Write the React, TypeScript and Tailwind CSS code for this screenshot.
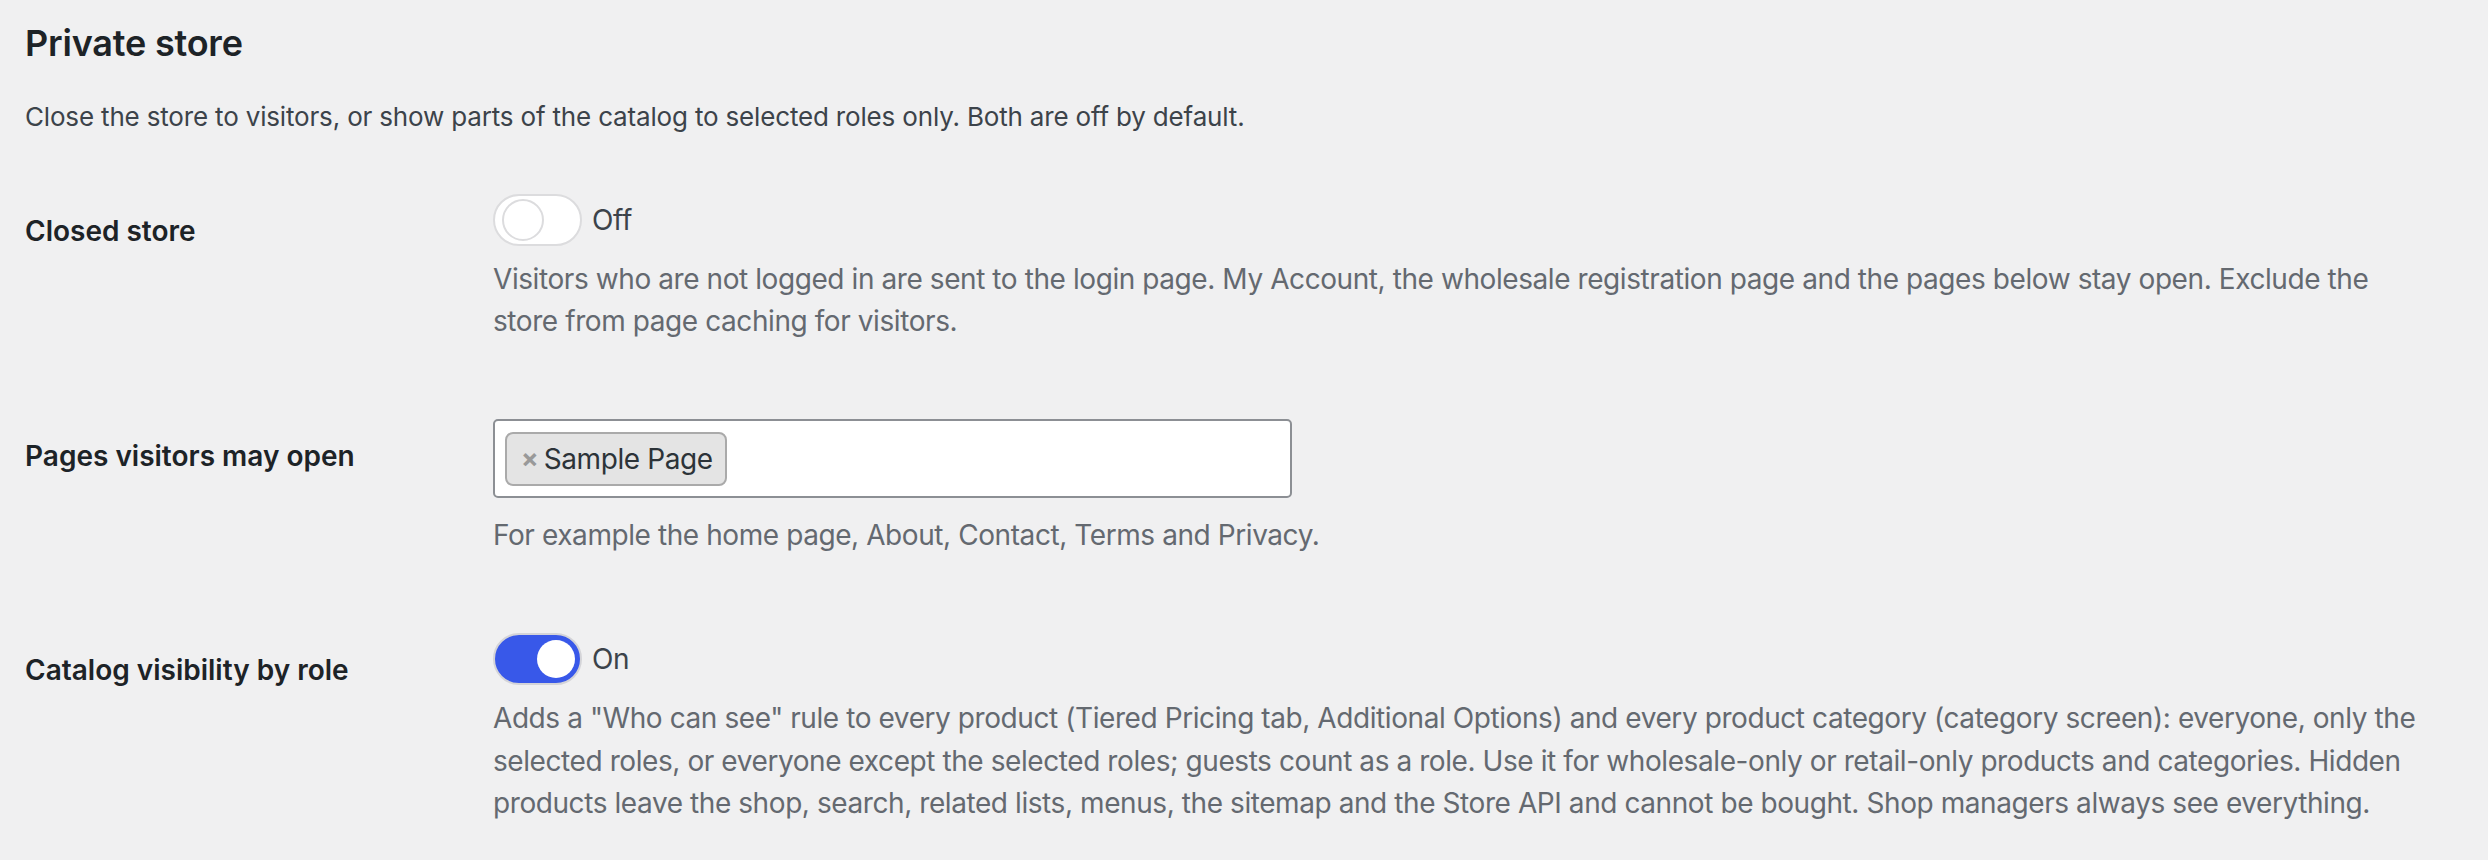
import React from "react";

const font = { fontFamily: 'Inter, "Noto Sans", sans-serif' };

function Toggle({ on, label }: { on: boolean; label: string }) {
  return (
    <div className="flex items-center gap-[10px]">
      <span
        className={
          on
            ? "relative flex h-[52px] w-[89px] items-center justify-end rounded-full border-2 border-[#d4d4d8] bg-[#3858e9] pr-[5px]"
            : "relative flex h-[52px] w-[89px] items-center justify-start rounded-full border-2 border-[#dcdcde] bg-white pl-[7px]"
        }
      >
        <span
          className={
            on
              ? "block h-[38px] w-[38px] rounded-full bg-white"
              : "block h-[42px] w-[42px] rounded-full border-2 border-[#dcdcde] bg-white"
          }
        />
      </span>
      <span className="text-[28px] leading-[36px] tracking-[-0.4px] text-[#3c434a]">{label}</span>
    </div>
  );
}

function Row({ label, children }: { label: string; children: React.ReactNode }) {
  return (
    <div className="grid grid-cols-[468px_1fr]">
      <div className="pt-[19px] text-[28px] font-semibold leading-[36px] text-[#1d2327]">{label}</div>
      <div className="w-[1930px]">{children}</div>
    </div>
  );
}

export default function App() {
  return (
    <div className="min-h-[860px] w-full bg-[#f0f0f1] pl-[25px] pt-[19px]" style={font}>
      <h2 className="text-[36px] font-semibold leading-[48px] tracking-[-0.2px] text-[#1d2327]">Private store</h2>
      <p className="mt-[29px] text-[26px] leading-[42px] tracking-[-0.17px] text-[#3c434a]">
        Close the store to visitors, or show parts of the catalog to selected roles only. Both are off by default.
      </p>

      <div className="mt-[56px] flex flex-col gap-[77px]">
        <Row label="Closed store">
          <Toggle on={false} label="Off" />
          <p className="mt-[12px] text-[28px] leading-[42px] tracking-[-0.42px] text-[#646970]">
            Visitors who are not logged in are sent to the login page. My Account, the wholesale registration page and the pages below stay open. Exclude the store from page caching for visitors.
          </p>
        </Row>

        <Row label="Pages visitors may open">
          <div className="flex h-[79px] w-[799px] items-center rounded-[5px] border-2 border-[#8c8f94] bg-white px-[10px]">
            <span className="flex h-[54px] items-center gap-[5px] rounded-[8px] border-2 border-[#aaaaaa] bg-[#e4e4e4] pl-[14px] pr-[12px]">
              <span className="text-[26px] font-bold leading-none text-[#999999]">×</span>
              <span className="text-[28px] leading-[36px] tracking-[-0.4px] text-[#2c3338]">Sample Page</span>
            </span>
          </div>
          <p className="mt-[16px] text-[28px] leading-[42px] tracking-[-0.42px] text-[#646970]">
            For example the home page, About, Contact, Terms and Privacy.
          </p>
        </Row>

        <Row label="Catalog visibility by role">
          <Toggle on={true} label="On" />
          <p className="mt-[12px] text-[28px] leading-[42.5px] tracking-[-0.42px] text-[#646970]">
            Adds a "Who can see" rule to every product (Tiered Pricing tab, Additional Options) and every product category (category screen): everyone, only the selected roles, or everyone except the selected roles; guests count as a role. Use it for wholesale-only or retail-only products and categories. Hidden products leave the shop, search, related lists, menus, the sitemap and the Store API and cannot be bought. Shop managers always see everything.
          </p>
        </Row>
      </div>
    </div>
  );
}
